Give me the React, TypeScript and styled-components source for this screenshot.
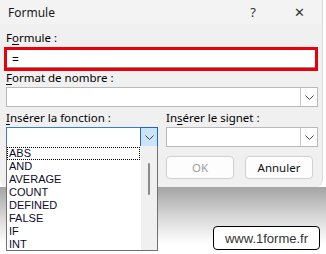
import React from "react";
import styled, { createGlobalStyle } from "styled-components";

const GlobalStyle = createGlobalStyle`
  html, body {
    margin: 0;
    padding: 0;
    background: #ffffff;
    font-family: "Noto Sans", "Open Sans", sans-serif;
  }
`;

const Page = styled.div`
  position: relative;
  width: 326px;
  height: 254px;
  overflow: hidden;
  background: #ffffff;
  display: flex;
  flex-direction: column;
`;

const Dialog = styled.div`
  width: 323px;
  height: 187px;
  flex-shrink: 0;
  background: #f0f0f0;
  border-radius: 0 0 8px 8px;
  border-right: 1px solid #dcdcdc;
  box-sizing: border-box;
  display: flex;
  flex-direction: column;
`;

const Shade = styled.div`
  flex: 1;
  background: linear-gradient(#a4a4a4, #d8d8d8 45%, #ffffff 85%);
`;

const TitleBar = styled.div`
  height: 24px;
  background: #f3f3f3;
  display: flex;
  align-items: center;
  padding: 0 0 0 8px;
  font-size: 12px;
  color: #1a1a1a;
`;

const Title = styled.span`
  flex: 1;
`;

const TitleButton = styled.span`
  width: 46px;
  text-align: center;
  font-size: 13px;
  color: #333;
`;

const Body = styled.div`
  padding: 7px 5px 0 6px;
  display: flex;
  flex-direction: column;
  font-size: 11.5px;
  color: #000;
`;

const Label = styled.div<{ $gap?: number }>`
  height: 14px;
  line-height: 14px;
  margin-bottom: ${(p) => p.$gap ?? 2}px;
`;

const Key = styled.span`
  text-decoration: underline;
  text-underline-offset: 2px;
`;

const Highlighted = styled.div`
  margin: 0 0 0 -2px;
  width: 314px;
  height: 24px;
  box-sizing: border-box;
  border: 3px solid #e8000b;
  background: #fff;
  padding: 0 0 0 5px;
  display: flex;
  align-items: center;
  font-size: 12px;
  box-shadow: inset 0 -1px 0 #8a8a8a;
`;

const Combo = styled.div<{ $w: number; $focus?: boolean }>`
  width: ${(p) => p.$w}px;
  height: 20px;
  box-sizing: border-box;
  border: 1px solid ${(p) => (p.$focus ? "#3a7bd5" : "#b9b9b9")};
  background: #fff;
  display: flex;
  justify-content: flex-end;
`;

const Arrow = styled.div<{ $focus?: boolean }>`
  width: 17px;
  height: 100%;
  box-sizing: border-box;
  border-left: 1px solid ${(p) => (p.$focus ? "#1f64c8" : "#c8c8c8")};
  ${(p) => (p.$focus ? "border: 1px solid #1f64c8; margin: -1px -1px -1px 0; height: 20px; width: 18px;" : "")}
  background: ${(p) => (p.$focus ? "#cce4f7" : "#fff")};
  display: flex;
  align-items: center;
  justify-content: center;
`;

const Columns = styled.div`
  display: flex;
  gap: 8px;
  margin-top: 4px;
`;

const Column = styled.div`
  display: flex;
  flex-direction: column;
`;

const Buttons = styled.div`
  display: flex;
  gap: 11px;
  margin-top: 9px;
`;

const Button = styled.div<{ $disabled?: boolean }>`
  width: 68px;
  height: 23px;
  box-sizing: border-box;
  border: 1px solid #d0d0d0;
  border-radius: 4px;
  background: #fdfdfd;
  color: ${(p) => (p.$disabled ? "#9d9d9d" : "#111")};
  display: flex;
  align-items: center;
  justify-content: center;
  font-size: 11.5px;
`;

const ListBox = styled.div`
  position: absolute;
  left: 6px;
  top: 146px;
  width: 152px;
  height: 105px;
  box-sizing: border-box;
  border: 1px solid #707070;
  border-top: none;
  background: #fff;
  display: flex;
`;

const Items = styled.div`
  flex: 1;
  display: flex;
  flex-direction: column;
  padding-top: 1px;
`;

const Item = styled.div<{ $focus?: boolean }>`
  height: 13px;
  line-height: 13px;
  padding-left: 2px;
  font-family: "Liberation Sans", Arial, sans-serif;
  font-size: 11px;
  color: #0b0b2a;
  outline: ${(p) => (p.$focus ? "1px dotted #000" : "none")};
  outline-offset: -1px;
  margin-right: 1px;
`;

const ScrollTrack = styled.div`
  width: 16px;
  background: #f0f0f0;
  display: flex;
  justify-content: center;
  padding-top: 17px;
`;

const Thumb = styled.div`
  width: 2px;
  height: 32px;
  background: #8a8a8a;
  border-radius: 1px;
`;

const Watermark = styled.div`
  position: absolute;
  left: 213px;
  top: 226px;
  width: 107px;
  height: 24px;
  box-sizing: border-box;
  border: 1px solid #000;
  border-radius: 4px;
  background: #fff;
  display: flex;
  align-items: center;
  justify-content: center;
  font-family: "Liberation Sans", Arial, sans-serif;
  font-size: 13px;
  color: #333;
`;

const Chevron: React.FC = () => (
  <svg width="9" height="5" viewBox="0 0 9 5">
    <path d="M0.5 0.5 L4.5 4.5 L8.5 0.5" fill="none" stroke="#444" strokeWidth="1" />
  </svg>
);

const functions = ["ABS", "AND", "AVERAGE", "COUNT", "DEFINED", "FALSE", "IF", "INT"];

export default function App() {
  return (
    <Page>
      <GlobalStyle />
      <Dialog>
        <TitleBar>
          <Title>Formule</Title>
          <TitleButton>?</TitleButton>
          <TitleButton>✕</TitleButton>
        </TitleBar>
        <Body>
          <Label>
            F<Key>o</Key>rmule :
          </Label>
          <Highlighted>=</Highlighted>
          <Label style={{ marginTop: 0 }}>
            <Key>F</Key>ormat de nombre :
          </Label>
          <Combo $w={312}>
            <Arrow>
              <Chevron />
            </Arrow>
          </Combo>
          <Columns>
            <Column>
              <Label $gap={2}>
                <Key>I</Key>nsérer la fonction :
              </Label>
              <Combo $w={152} $focus>
                <Arrow $focus>
                  <Chevron />
                </Arrow>
              </Combo>
            </Column>
            <Column>
              <Label $gap={2}>
                In<Key>s</Key>érer le signet :
              </Label>
              <Combo $w={152}>
                <Arrow>
                  <Chevron />
                </Arrow>
              </Combo>
              <Buttons>
                <Button $disabled>OK</Button>
                <Button>Annuler</Button>
              </Buttons>
            </Column>
          </Columns>
        </Body>
      </Dialog>
      <Shade />
      <ListBox>
        <Items>
          {functions.map((f, i) => (
            <Item key={f} $focus={i === 0}>
              {f}
            </Item>
          ))}
        </Items>
        <ScrollTrack>
          <Thumb />
        </ScrollTrack>
      </ListBox>
      <Watermark>www.1forme.fr</Watermark>
    </Page>
  );
}
